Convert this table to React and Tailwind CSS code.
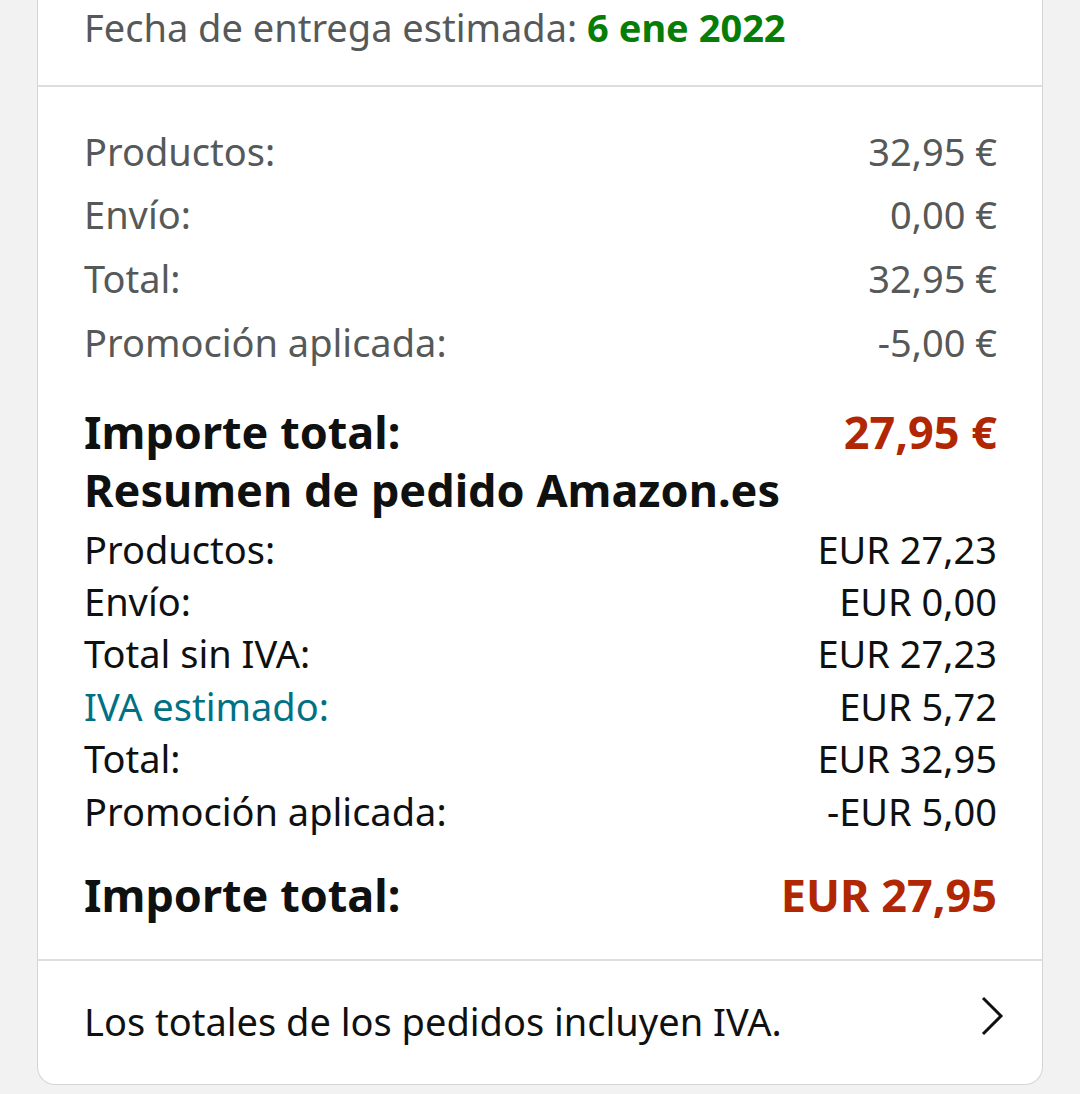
import React from "react";

const font = { fontFamily: '"Noto Sans", "Open Sans", Arial, sans-serif' };

function Row({ label, value, className = "", labelClass = "" }) {
  return (
    <div className={`flex justify-between items-center ${className}`}>
      <span className={labelClass}>{label}</span>
      <span>{value}</span>
    </div>
  );
}

export default function App() {
  return (
    <div className="w-[1080px] h-[1094px] bg-[#f2f2f2] overflow-hidden px-[37px]" style={font}>
      <div className="bg-white border border-t-0 border-[#d5d5d5] rounded-b-[18px] overflow-hidden">
        <div className="h-[87px] pl-[46px] text-[38px] leading-[54px] text-[#565959] border-b-2 border-[#dddddd]">
          Fecha de entrega estimada: <span className="font-bold text-[#067d06]">6 ene 2022</span>
        </div>
        <div className="pl-[46px] pr-[45px] pt-[33px] pb-[35px] border-b-2 border-[#dddddd]">
          <div className="text-[38px] text-[#565959]">
            <Row label="Productos:" value="32,95 €" className="h-[63px]" />
            <Row label="Envío:" value="0,00 €" className="h-[63px]" />
            <Row label="Total:" value="32,95 €" className="h-[64px]" />
            <Row label="Promoción aplicada:" value="-5,00 €" className="h-[64px]" />
          </div>
          <div className="mt-[29px] text-[45px] font-bold text-[#0f1111] leading-[58px]">
            <div className="flex justify-between">
              <span>Importe total:</span>
              <span className="text-[#b12704]">27,95 €</span>
            </div>
            <div>Resumen de pedido Amazon.es</div>
          </div>
          <div className="mt-[4px] text-[38px] text-[#0f1111]">
            <Row label="Productos:" value="EUR 27,23" className="h-[52.4px]" />
            <Row label="Envío:" value="EUR 0,00" className="h-[52.4px]" />
            <Row label="Total sin IVA:" value="EUR 27,23" className="h-[52.4px]" />
            <Row label="IVA estimado:" value="EUR 5,72" className="h-[52.4px]" labelClass="text-[#007185]" />
            <Row label="Total:" value="EUR 32,95" className="h-[52.4px]" />
            <Row label="Promoción aplicada:" value="-EUR 5,00" className="h-[52.4px]" />
          </div>
          <div className="mt-[29px] flex justify-between text-[45px] font-bold text-[#0f1111] leading-[58px]">
            <span>Importe total:</span>
            <span className="text-[#b12704]">EUR 27,95</span>
          </div>
        </div>
        <div className="h-[123px] pl-[46px] pr-[38px] flex items-center justify-between text-[38px] text-[#0f1111]">
          <span className="-mt-[2px]">Los totales de los pedidos incluyen IVA.</span>
          <svg width="24" height="40" viewBox="0 0 24 40" fill="none" className="-mt-[14px]">
            <path d="M3 2 L21 20 L3 38" stroke="#0f1111" strokeWidth="3" />
          </svg>
        </div>
      </div>
    </div>
  );
}
